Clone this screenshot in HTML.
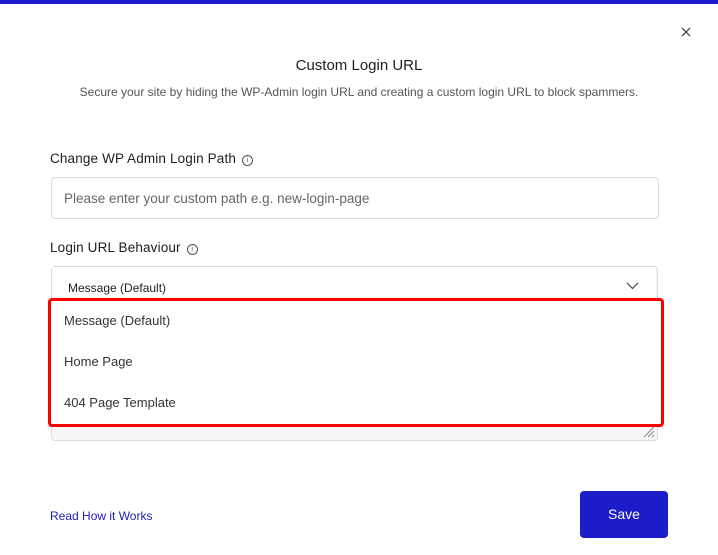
<!DOCTYPE html>
<html><head><style>
body{margin:0;width:718px;height:555px;background:#fff;font-family:"Liberation Sans",sans-serif;position:relative;overflow:hidden;color:#1e1e1e}
.a{position:absolute}
.info{display:inline-block;width:9px;height:9px;border:1px solid #555;border-radius:50%;font-size:7px;text-align:center;line-height:9px;vertical-align:1px;margin-left:6px;color:#555}
</style></head><body>
<div class="a" style="left:0;top:0;width:718px;height:4px;background:#1c1ccc"></div>
<svg class="a" style="left:681px;top:27px" width="10" height="10"><path d="M1 1l8 8M9 1l-8 8" stroke="#333" stroke-width="1.2"/></svg>
<div class="a" style="left:0;width:718px;top:57px;text-align:center;font-size:15px;color:#1e1e1e">Custom Login URL</div>
<div class="a" style="left:0;width:718px;top:85px;text-align:center;font-size:12px;color:#555">Secure your site by hiding the WP-Admin login URL and creating a custom login URL to block spammers.</div>
<div class="a" style="left:50px;top:151px;font-size:13.5px;letter-spacing:0.15px">Change WP Admin Login Path<span class="info">i</span></div>
<div class="a" style="left:51px;top:177px;width:606px;height:40px;border:1px solid #dcdcde;border-radius:4px"></div>
<div class="a" style="left:64px;top:191px;font-size:13.5px;color:#666">Please enter your custom path e.g. new-login-page</div>
<div class="a" style="left:50px;top:240px;font-size:13.5px;letter-spacing:0.15px">Login URL Behaviour<span class="info">i</span></div>
<div class="a" style="left:51px;top:266px;width:605px;height:173px;border:1px solid #dcdcde;border-radius:4px;background:#f6f6f6"></div>
<div class="a" style="left:52px;top:267px;width:604px;height:32px;background:#fff"></div>
<div class="a" style="left:68px;top:281px;font-size:12px">Message (Default)</div>
<svg class="a" style="left:626px;top:282px" width="13" height="8"><path d="M1 1l5.5 5.5L12 1" fill="none" stroke="#555" stroke-width="1.3"/></svg>
<svg class="a" style="left:641px;top:426px" width="14" height="12"><path d="M3 11L13 1M7 11l6-6M11 11l2-2" stroke="#888" stroke-width="1"/></svg>
<div class="a" style="left:48px;top:298px;width:610px;height:123px;border:3px solid #f00;border-radius:4px;background:#fff"></div>
<div class="a" style="left:64px;top:313px;font-size:13px;color:#333">Message (Default)</div>
<div class="a" style="left:64px;top:354px;font-size:13px;color:#333">Home Page</div>
<div class="a" style="left:64px;top:395px;font-size:13px;color:#333">404 Page Template</div>
<div class="a" style="left:50px;top:509px;font-size:12px;color:#1c1cb8">Read How it Works</div>
<div class="a" style="left:580px;top:491px;width:88px;height:47px;background:#1c1cc8;border-radius:4px;color:#fff;font-size:14px;text-align:center;line-height:47px">Save</div>
</body></html>
